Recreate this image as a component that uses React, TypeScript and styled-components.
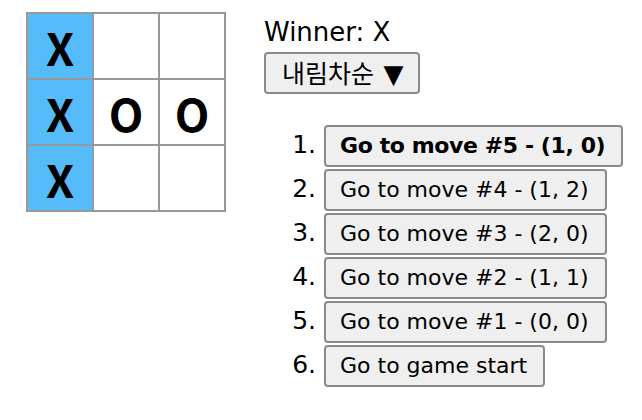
import React from "react";
import styled, { createGlobalStyle } from "styled-components";

const GlobalStyle = createGlobalStyle`
  html, body { margin: 0; padding: 0; background: #fff; }
  body {
    font-family: "DejaVu Sans", "Noto Sans CJK KR", sans-serif;
    color: #000;
  }
`;

const Game = styled.div`
  display: flex;
  flex-direction: row;
  padding: 12px 0 0 26px;
`;

const Board = styled.div`
  display: flex;
  flex-direction: column;
`;

const BoardRow = styled.div`
  display: flex;
  margin-bottom: -2px;
`;

const Square = styled.button<{ $win?: boolean }>`
  box-sizing: border-box;
  width: 68px;
  height: 68px;
  margin: 0 -2px 0 0;
  padding: 0;
  border: 2px solid #999;
  border-radius: 0;
  background: ${(p) => (p.$win ? "#55bcf9" : "#fff")};
  font-family: "Noto Sans CJK KR", "Noto Sans", sans-serif;
  font-size: 45px;
  font-weight: bold;
  line-height: 1;
  color: #000;
  display: flex;
  align-items: center;
  justify-content: center;
`;

const GameInfo = styled.div`
  margin-left: 40px;
  display: flex;
  flex-direction: column;
  align-items: flex-start;
`;

const Status = styled.div`
  font-size: 26px;
  line-height: 30px;
  margin-top: 5px;
  margin-bottom: 5px;
`;

const BaseButton = styled.button<{ $bold?: boolean }>`
  box-sizing: border-box;
  height: 42px;
  padding: 0 16px 0 14px;
  border: 2px solid #8a8a8a;
  border-radius: 4px;
  background: #efefef;
  font-family: "DejaVu Sans", "Noto Sans CJK KR", sans-serif;
  font-size: 22px;
  font-weight: ${(p) => (p.$bold ? "bold" : "normal")};
  letter-spacing: ${(p) => (p.$bold ? "-0.4px" : "0")};
  color: #000;
  line-height: 1;
`;

const SortButton = styled(BaseButton)`
  font-family: "Noto Sans CJK KR", "DejaVu Sans", sans-serif;
  font-size: 25px;
  padding: 0 14px 0 16px;
`;

const Tri = styled.span`
  font-family: "DejaVu Sans", sans-serif;
  font-size: 26px;
  margin-left: 4px;
`;

const MoveList = styled.ol`
  margin: 29px 0 0 0;
  padding-left: 60px;
  font-size: 25px;
`;

const MoveItem = styled.li`
  height: 44px;
  line-height: 44px;
`;

const squares = ["X", null, null, "X", "O", "O", "X", null, null];
const winLine = [0, 3, 6];

const moves = [
  { label: "Go to move #5 - (1, 0)", bold: true },
  { label: "Go to move #4 - (1, 2)" },
  { label: "Go to move #3 - (2, 0)" },
  { label: "Go to move #2 - (1, 1)" },
  { label: "Go to move #1 - (0, 0)" },
  { label: "Go to game start" },
];

export default function App() {
  return (
    <>
      <GlobalStyle />
      <Game>
        <Board>
          {[0, 1, 2].map((r) => (
            <BoardRow key={r}>
              {[0, 1, 2].map((c) => {
                const i = r * 3 + c;
                return (
                  <Square key={i} $win={winLine.includes(i)}>
                    {squares[i]}
                  </Square>
                );
              })}
            </BoardRow>
          ))}
        </Board>
        <GameInfo>
          <Status>Winner: X</Status>
          <SortButton>
            내림차순 <Tri>▼</Tri>
          </SortButton>
          <MoveList>
            {moves.map((m, i) => (
              <MoveItem key={i}>
                <BaseButton $bold={m.bold}>{m.label}</BaseButton>
              </MoveItem>
            ))}
          </MoveList>
        </GameInfo>
      </Game>
    </>
  );
}
